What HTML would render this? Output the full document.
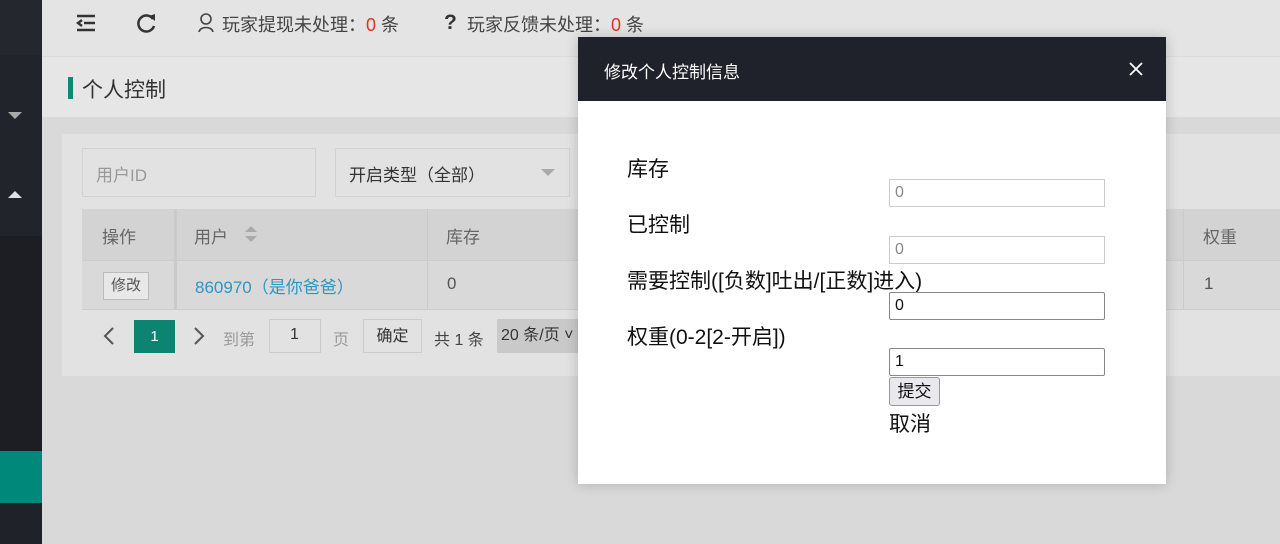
<!DOCTYPE html>
<html><head><meta charset="utf-8"><style>
*{margin:0;padding:0;box-sizing:border-box}
body{width:1280px;height:544px;overflow:hidden;background:#d9d9d9;font-family:"Liberation Sans","Noto Sans CJK SC",sans-serif;position:relative;color:#333}
.a{position:absolute}
.side{left:0;top:0;width:42px;height:544px;background:#1c1e24}
.t{white-space:nowrap}
.lb{font-size:21px;color:#111}
</style></head><body>
<div class="a side"></div>
<div class="a" style="left:0;top:0;width:42px;height:55px;background:#25272e"></div>
<div class="a" style="left:0;top:55px;width:42px;height:181px;background:#22242b"></div>
<div class="a" style="left:8px;top:112px;width:0;height:0;border-left:7px solid transparent;border-right:7px solid transparent;border-top:7px solid #a9a9aa"></div>
<div class="a" style="left:8px;top:191px;width:0;height:0;border-left:7px solid transparent;border-right:7px solid transparent;border-bottom:7px solid #e0e0e0"></div>
<div class="a" style="left:0;top:451px;width:42px;height:52px;background:#00897a"></div>
<div class="a" style="left:0;top:503px;width:42px;height:41px;background:#202229"></div>

<div class="a" style="left:42px;top:0;width:1238px;height:56px;background:#e4e4e4"></div>
<div class="a" style="left:42px;top:56px;width:1238px;height:61px;background:#e6e6e6;border-top:1px solid #dcdcdc"></div>
<svg class="a" style="left:74px;top:12px" width="24" height="22"><g stroke="#333" stroke-width="2.4" fill="none"><path d="M3 4H21M10 11H21M3 18H21M8 8L4 11L8 14"/></g></svg>
<svg class="a" style="left:135px;top:11px" width="24" height="24"><path d="M18 8A8 8 0 1 0 19 15" stroke="#333" stroke-width="2.5" fill="none"/><path d="M14 5L20 3L20 10Z" fill="#333"/></svg>
<svg class="a" style="left:197px;top:12px" width="20" height="22"><circle cx="9" cy="7" r="5" stroke="#444" stroke-width="1.6" fill="none"/><path d="M2 20C3 14 15 14 16 20" stroke="#444" stroke-width="1.6" fill="none"/></svg>
<div class="a t" style="left:222px;top:11px;font-size:18px;color:#444">玩家提现未处理：<span style="color:#d32">0</span> 条</div>
<div class="a t" style="left:444px;top:11px;font-size:21px;font-weight:bold;color:#333">?</div>
<div class="a t" style="left:467px;top:11px;font-size:18px;color:#444">玩家反馈未处理：<span style="color:#d32">0</span> 条</div>
<div class="a" style="left:68px;top:77px;width:5px;height:22px;background:#0c8a72"></div>
<div class="a t" style="left:82px;top:74px;font-size:21px;color:#333">个人控制</div>

<div class="a" style="left:62px;top:134px;width:1218px;height:242px;background:#e2e2e2"></div>
<div class="a" style="left:82px;top:148px;width:234px;height:49px;border:1px solid #d2d2d2;background:#e2e2e2"></div>
<div class="a t" style="left:96px;top:161px;font-size:17px;color:#999">用户ID</div>
<div class="a" style="left:335px;top:148px;width:235px;height:49px;border:1px solid #d2d2d2;background:#e2e2e2"></div>
<div class="a t" style="left:349px;top:161px;font-size:17px;color:#333">开启类型（全部）</div>
<div class="a" style="left:541px;top:169px;border-left:7px solid transparent;border-right:7px solid transparent;border-top:7px solid #aaa"></div>

<div class="a" style="left:82px;top:209px;width:1198px;height:51px;background:#d3d3d3"></div>
<div class="a" style="left:82px;top:260px;width:1198px;height:50px;background:#d9d9d9;border-top:1px solid #ccc;border-bottom:1px solid #ccc"></div>
<div class="a" style="left:174px;top:209px;width:3px;height:101px;background:#cacaca"></div>
<div class="a" style="left:427px;top:209px;width:1px;height:101px;background:#cacaca"></div>
<div class="a" style="left:1183px;top:209px;width:1px;height:101px;background:#cacaca"></div>
<div class="a t" style="left:102px;top:223px;font-size:17px;color:#666">操作</div>
<div class="a t" style="left:194px;top:223px;font-size:17px;color:#666">用户</div>
<div class="a" style="left:245px;top:226px;border-left:6px solid transparent;border-right:6px solid transparent;border-bottom:6px solid #aaa"></div>
<div class="a" style="left:245px;top:236px;border-left:6px solid transparent;border-right:6px solid transparent;border-top:6px solid #aaa"></div>
<div class="a t" style="left:446px;top:223px;font-size:17px;color:#666">库存</div>
<div class="a t" style="left:1203px;top:223px;font-size:17px;color:#666">权重</div>
<div class="a t" style="left:103px;top:272px;width:46px;height:28px;border:1px solid #bbb;background:#e8e8e8;font-size:15px;color:#555;text-align:center;line-height:26px">修改</div>
<div class="a t" style="left:195px;top:273px;font-size:17px;color:#2b96c6">860970（是你爸爸）</div>
<div class="a t" style="left:447px;top:274px;font-size:17px;color:#555">0</div>
<div class="a t" style="left:1204px;top:274px;font-size:17px;color:#555">1</div>

<svg class="a" style="left:102px;top:326px" width="14" height="20"><path d="M11 2L3 10L11 18" stroke="#555" stroke-width="2" fill="none"/></svg>
<div class="a t" style="left:134px;top:320px;width:41px;height:33px;background:#0b8572;color:#fff;font-size:15px;text-align:center;line-height:33px">1</div>
<svg class="a" style="left:192px;top:326px" width="14" height="20"><path d="M3 2L11 10L3 18" stroke="#555" stroke-width="2" fill="none"/></svg>
<div class="a t" style="left:223px;top:326px;font-size:16px;color:#999">到第</div>
<div class="a" style="left:269px;top:319px;width:52px;height:34px;border:1px solid #ccc"></div>
<div class="a t" style="left:290px;top:326px;font-size:16px;color:#333">1</div>
<div class="a t" style="left:333px;top:326px;font-size:16px;color:#999">页</div>
<div class="a t" style="left:363px;top:319px;width:59px;height:34px;border:1px solid #ccc;text-align:center;line-height:34px;font-size:16px;color:#333">确定</div>
<div class="a t" style="left:434px;top:326px;font-size:16px;color:#444">共 1 条</div>
<div class="a t" style="left:497px;top:319px;width:81px;height:34px;background:#c9c9c9;padding-left:4px;line-height:34px;font-size:16px;color:#333">20 条/页 ˅</div>

<div class="a" style="left:578px;top:37px;width:588px;height:447px;background:#fff;box-shadow:0 0 12px rgba(0,0,0,.2)"></div>
<div class="a" style="left:578px;top:37px;width:588px;height:64px;background:#20222b"></div>
<div class="a t" style="left:604px;top:58px;font-size:17px;color:#fff">修改个人控制信息</div>
<svg class="a" style="left:1128px;top:61px" width="16" height="16"><path d="M2 2L14 14M14 2L2 14" stroke="#fff" stroke-width="1.8"/></svg>
<div class="a t lb" style="left:627px;top:153px">库存</div>
<div class="a" style="left:889px;top:179px;width:216px;height:28px;border:1px solid #ccc;font-size:16px;color:#888;padding:4px 5px">0</div>
<div class="a t lb" style="left:627px;top:209px">已控制</div>
<div class="a" style="left:889px;top:236px;width:216px;height:28px;border:1px solid #ccc;font-size:16px;color:#888;padding:4px 5px">0</div>
<div class="a t lb" style="left:627px;top:265px">需要控制([负数]吐出/[正数]进入)</div>
<div class="a" style="left:889px;top:292px;width:216px;height:28px;border:1px solid #888;border-radius:2px;font-size:16px;color:#111;padding:4px 5px">0</div>
<div class="a t lb" style="left:627px;top:321px">权重(0-2[2-开启])</div>
<div class="a" style="left:889px;top:348px;width:216px;height:28px;border:1px solid #888;border-radius:2px;font-size:16px;color:#111;padding:4px 5px">1</div>
<div class="a t" style="left:889px;top:377px;width:51px;height:29px;border:1px solid #999;border-radius:3px;background:#e9e9ed;font-size:17px;color:#111;text-align:center;line-height:27px">提交</div>
<div class="a t lb" style="left:889px;top:408px">取消</div>
</body></html>
